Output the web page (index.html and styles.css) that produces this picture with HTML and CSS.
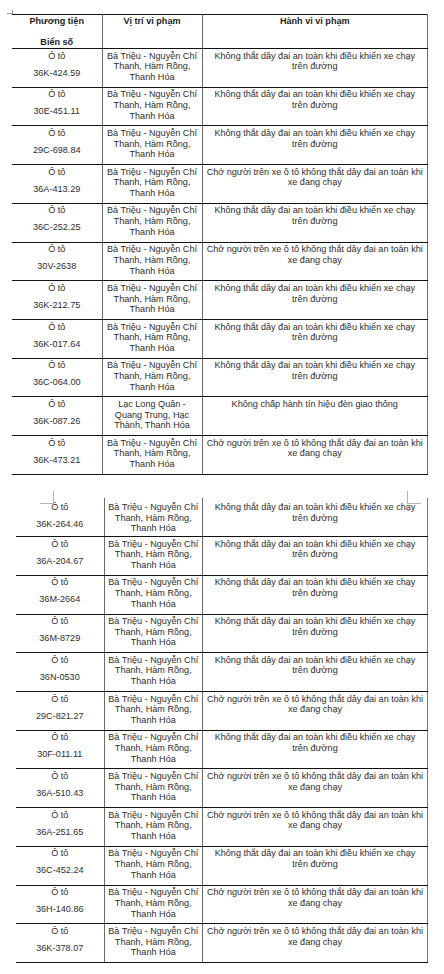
FILE: index.html
```html
<!DOCTYPE html>
<html lang="vi">
<head>
<meta charset="utf-8">
<title>Vi phạm</title>
<link rel="stylesheet" href="styles.css">
</head>
<body>
<div class="doc">
  <span class="mark mark-tl"></span>
  <table class="grid grid-1">
    <colgroup><col class="c1"><col class="c2"><col class="c3"></colgroup>
    <tr class="head">
      <th><div>Phương tiện</div><div class="p2">Biển số</div></th>
      <th>Vị trí vi phạm</th>
      <th>Hành vi vi phạm</th>
    </tr>
    <tr><td><div>Ô tô</div><div class="p2">36K-424.59</div></td><td>Bà Triệu - Nguyễn Chí<br>Thanh, Hàm Rồng,<br>Thanh Hóa</td><td>Không thắt dây đai an toàn khi điều khiển xe chạy<br>trên đường</td></tr>
    <tr><td><div>Ô tô</div><div class="p2">30E-451.11</div></td><td>Bà Triệu - Nguyễn Chí<br>Thanh, Hàm Rồng,<br>Thanh Hóa</td><td>Không thắt dây đai an toàn khi điều khiển xe chạy<br>trên đường</td></tr>
    <tr><td><div>Ô tô</div><div class="p2">29C-698.84</div></td><td>Bà Triệu - Nguyễn Chí<br>Thanh, Hàm Rồng,<br>Thanh Hóa</td><td>Không thắt dây đai an toàn khi điều khiển xe chạy<br>trên đường</td></tr>
    <tr><td><div>Ô tô</div><div class="p2">36A-413.29</div></td><td>Bà Triệu - Nguyễn Chí<br>Thanh, Hàm Rồng,<br>Thanh Hóa</td><td>Chở người trên xe ô tô không thắt dây đai an toàn khi<br>xe đang chạy</td></tr>
    <tr><td><div>Ô tô</div><div class="p2">36C-252.25</div></td><td>Bà Triệu - Nguyễn Chí<br>Thanh, Hàm Rồng,<br>Thanh Hóa</td><td>Không thắt dây đai an toàn khi điều khiển xe chạy<br>trên đường</td></tr>
    <tr><td><div>Ô tô</div><div class="p2">30V-2638</div></td><td>Bà Triệu - Nguyễn Chí<br>Thanh, Hàm Rồng,<br>Thanh Hóa</td><td>Chở người trên xe ô tô không thắt dây đai an toàn khi<br>xe đang chạy</td></tr>
    <tr><td><div>Ô tô</div><div class="p2">36K-212.75</div></td><td>Bà Triệu - Nguyễn Chí<br>Thanh, Hàm Rồng,<br>Thanh Hóa</td><td>Không thắt dây đai an toàn khi điều khiển xe chạy<br>trên đường</td></tr>
    <tr><td><div>Ô tô</div><div class="p2">36K-017.64</div></td><td>Bà Triệu - Nguyễn Chí<br>Thanh, Hàm Rồng,<br>Thanh Hóa</td><td>Không thắt dây đai an toàn khi điều khiển xe chạy<br>trên đường</td></tr>
    <tr><td><div>Ô tô</div><div class="p2">36C-064.00</div></td><td>Bà Triệu - Nguyễn Chí<br>Thanh, Hàm Rồng,<br>Thanh Hóa</td><td>Không thắt dây đai an toàn khi điều khiển xe chạy<br>trên đường</td></tr>
    <tr><td><div>Ô tô</div><div class="p2">36K-087.26</div></td><td>Lạc Long Quân -<br>Quang Trung, Hạc<br>Thành, Thanh Hóa</td><td class="single">Không chấp hành tín hiệu đèn giao thông</td></tr>
    <tr><td><div>Ô tô</div><div class="p2">36K-473.21</div></td><td>Bà Triệu - Nguyễn Chí<br>Thanh, Hàm Rồng,<br>Thanh Hóa</td><td>Chở người trên xe ô tô không thắt dây đai an toàn khi<br>xe đang chạy</td></tr>
  </table>

  <div class="page-break">
    <span class="mark mark-bl"></span>
    <span class="mark mark-br"></span>
  </div>

  <table class="grid grid-2">
    <colgroup><col class="d1"><col class="d2"><col class="d3"></colgroup>
    <tr class="first"><td><div>Ô tô</div><div class="p2">36K-264.46</div></td><td>Bà Triệu - Nguyễn Chí<br>Thanh, Hàm Rồng,<br>Thanh Hóa</td><td>Không thắt dây đai an toàn khi điều khiển xe chạy<br>trên đường</td></tr>
    <tr><td><div>Ô tô</div><div class="p2">36A-204.67</div></td><td>Bà Triệu - Nguyễn Chí<br>Thanh, Hàm Rồng,<br>Thanh Hóa</td><td>Không thắt dây đai an toàn khi điều khiển xe chạy<br>trên đường</td></tr>
    <tr><td><div>Ô tô</div><div class="p2">36M-2664</div></td><td>Bà Triệu - Nguyễn Chí<br>Thanh, Hàm Rồng,<br>Thanh Hóa</td><td>Không thắt dây đai an toàn khi điều khiển xe chạy<br>trên đường</td></tr>
    <tr><td><div>Ô tô</div><div class="p2">36M-8729</div></td><td>Bà Triệu - Nguyễn Chí<br>Thanh, Hàm Rồng,<br>Thanh Hóa</td><td>Không thắt dây đai an toàn khi điều khiển xe chạy<br>trên đường</td></tr>
    <tr><td><div>Ô tô</div><div class="p2">36N-0530</div></td><td>Bà Triệu - Nguyễn Chí<br>Thanh, Hàm Rồng,<br>Thanh Hóa</td><td>Không thắt dây đai an toàn khi điều khiển xe chạy<br>trên đường</td></tr>
    <tr><td><div>Ô tô</div><div class="p2">29C-821.27</div></td><td>Bà Triệu - Nguyễn Chí<br>Thanh, Hàm Rồng,<br>Thanh Hóa</td><td>Chở người trên xe ô tô không thắt dây đai an toàn khi<br>xe đang chạy</td></tr>
    <tr><td><div>Ô tô</div><div class="p2">30F-011.11</div></td><td>Bà Triệu - Nguyễn Chí<br>Thanh, Hàm Rồng,<br>Thanh Hóa</td><td>Không thắt dây đai an toàn khi điều khiển xe chạy<br>trên đường</td></tr>
    <tr><td><div>Ô tô</div><div class="p2">36A-510.43</div></td><td>Bà Triệu - Nguyễn Chí<br>Thanh, Hàm Rồng,<br>Thanh Hóa</td><td>Chở người trên xe ô tô không thắt dây đai an toàn khi<br>xe đang chạy</td></tr>
    <tr><td><div>Ô tô</div><div class="p2">36A-251.65</div></td><td>Bà Triệu - Nguyễn Chí<br>Thanh, Hàm Rồng,<br>Thanh Hóa</td><td>Chở người trên xe ô tô không thắt dây đai an toàn khi<br>xe đang chạy</td></tr>
    <tr><td><div>Ô tô</div><div class="p2">36C-452.24</div></td><td>Bà Triệu - Nguyễn Chí<br>Thanh, Hàm Rồng,<br>Thanh Hóa</td><td>Không thắt dây đai an toàn khi điều khiển xe chạy<br>trên đường</td></tr>
    <tr><td><div>Ô tô</div><div class="p2">36H-140.86</div></td><td>Bà Triệu - Nguyễn Chí<br>Thanh, Hàm Rồng,<br>Thanh Hóa</td><td>Chở người trên xe ô tô không thắt dây đai an toàn khi<br>xe đang chạy</td></tr>
    <tr><td><div>Ô tô</div><div class="p2">36K-378.07</div></td><td>Bà Triệu - Nguyễn Chí<br>Thanh, Hàm Rồng,<br>Thanh Hóa</td><td>Chở người trên xe ô tô không thắt dây đai an toàn khi<br>xe đang chạy</td></tr>
  </table>
</div>
</body>
</html>
```

FILE: styles.css
```css
html, body {
  margin: 0;
  padding: 0;
  background: #ffffff;
}

.doc {
  position: relative;
  width: 444px;
  padding-top: 14px;
  font-family: "Liberation Sans", Arial, sans-serif;
  font-size: 9.1px;
  line-height: 10.7px;
  color: #2e2e2e;
}

.grid {
  border-collapse: collapse;
  table-layout: fixed;
}

.grid-1 {
  width: 416px;
  margin-left: 12px;
}

.grid-2 {
  width: 412px;
  margin-left: 16px;
}

.c1 { width: 90px; }
.c2 { width: 100px; }
.d1 { width: 88px; }
.d2 { width: 98.5px; }

.grid th,
.grid td {
  vertical-align: top;
  text-align: center;
  padding: 1.5px 2px 0 2px;
  border-top: 1px solid #111;
  border-bottom: 1px solid #111;
  border-left: 1px solid #6a6a6a;
  border-right: 1px solid #6a6a6a;
  overflow: hidden;
  white-space: nowrap;
}

.grid tr > :first-child {
  border-left: none;
}

.grid th {
  font-weight: bold;
  padding-top: 1px;
  color: #222;
}

.grid tr {
  height: 38.73px;
}

.grid tr.head {
  height: 34px;
}

.grid td .p2 {
  margin-top: 6.3px;
}

.grid th .p2 {
  margin-top: 10.5px;
}

.grid-2 tr.first td {
  border-top: none;
  padding-top: 4px;
}

.grid-2 tr > :last-child {
  border-right: 1.5px solid #777;
}

.page-break {
  position: relative;
  height: 23px;
}

.mark {
  position: absolute;
  display: block;
  border-color: #b4b4b4;
  border-style: solid;
  border-width: 0;
}

.mark-tl {
  left: 7px;
  top: 10px;
  width: 5px;
  height: 3px;
  border-right-width: 1px;
  border-bottom-width: 1px;
  border-color: #9a9a9a;
}

.mark-bl {
  left: 40px;
  top: 16px;
  width: 13px;
  height: 12px;
  border-right-width: 1px;
  border-bottom-width: 1px;
}

.mark-br {
  left: 407px;
  top: 16px;
  width: 13px;
  height: 12px;
  border-left-width: 1px;
  border-bottom-width: 1px;
}
```
